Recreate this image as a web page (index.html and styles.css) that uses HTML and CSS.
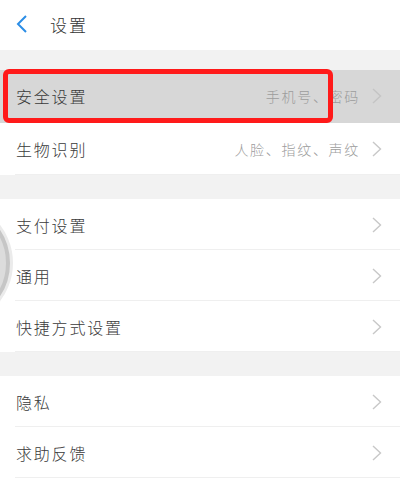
FILE: index.html
```html
<!DOCTYPE html>
<html lang="zh-CN">
<head>
<meta charset="utf-8">
<title>设置</title>
<link rel="stylesheet" href="styles.css">
</head>
<body>
<div class="page">
  <header class="header">
    <svg class="back" width="12" height="20" viewBox="0 0 12 20"><path d="M10 2 L2 10 L10 18" fill="none" stroke="#2b8de6" stroke-width="2"/></svg>
    <span class="title">设置</span>
  </header>

  <div class="gap first"></div>
  <section class="group tall">
    <div class="row active">
      <span class="label">安全设置</span>
      <span class="value">手机号、密码</span>
      <svg class="chev" width="10" height="16" viewBox="0 0 10 16"><path d="M1 1 L8.5 8 L1 15" fill="none" stroke="#c4c4c4" stroke-width="1.4"/></svg>
      <div class="mark"></div>
    </div>
    <div class="row">
      <span class="label">生物识别</span>
      <span class="value">人脸、指纹、声纹</span>
      <svg class="chev" width="10" height="16" viewBox="0 0 10 16"><path d="M1 1 L8.5 8 L1 15" fill="none" stroke="#c8c8c8" stroke-width="1.4"/></svg>
    </div>
  </section>

  <div class="gap"></div>
  <section class="group">
    <div class="row">
      <span class="label">支付设置</span>
      <svg class="chev" width="10" height="16" viewBox="0 0 10 16"><path d="M1 1 L8.5 8 L1 15" fill="none" stroke="#c8c8c8" stroke-width="1.4"/></svg>
    </div>
    <div class="row">
      <span class="label">通用</span>
      <svg class="chev" width="10" height="16" viewBox="0 0 10 16"><path d="M1 1 L8.5 8 L1 15" fill="none" stroke="#c8c8c8" stroke-width="1.4"/></svg>
    </div>
    <div class="row">
      <span class="label">快捷方式设置</span>
      <svg class="chev" width="10" height="16" viewBox="0 0 10 16"><path d="M1 1 L8.5 8 L1 15" fill="none" stroke="#c8c8c8" stroke-width="1.4"/></svg>
    </div>
  </section>

  <div class="gap"></div>
  <section class="group">
    <div class="row">
      <span class="label">隐私</span>
      <svg class="chev" width="10" height="16" viewBox="0 0 10 16"><path d="M1 1 L8.5 8 L1 15" fill="none" stroke="#c8c8c8" stroke-width="1.4"/></svg>
    </div>
    <div class="row">
      <span class="label">求助反馈</span>
      <svg class="chev" width="10" height="16" viewBox="0 0 10 16"><path d="M1 1 L8.5 8 L1 15" fill="none" stroke="#c8c8c8" stroke-width="1.4"/></svg>
    </div>
  </section>

  <div class="ball"></div>
</div>
</body>
</html>
```

FILE: styles.css
```css
html, body {
  margin: 0;
  padding: 0;
  background: #ffffff;
}
body {
  font-family: "Noto Sans CJK SC", "Noto Sans", sans-serif;
  color: #333333;
  overflow: hidden;
}
.page {
  position: relative;
  width: 400px;
  height: 484px;
  overflow: hidden;
  background: #ffffff;
}
.header {
  height: 50px;
  display: flex;
  align-items: center;
  padding-left: 16px;
  box-sizing: border-box;
}
.back {
  display: block;
  margin-top: -2px;
}
.title {
  margin-left: 22px;
  font-size: 17px;
  letter-spacing: 2px;
  font-weight: 300;
  color: #333;
  margin-top: -2px;
}
.gap {
  height: 24px;
  background: #f2f2f2;
}
.gap.first {
  height: 20px;
}
.group {
  display: flex;
  flex-direction: column;
}
.row {
  position: relative;
  height: 51px;
  display: flex;
  align-items: center;
  padding: 0 18px 0 16px;
  box-sizing: border-box;
}
.group.tall .row {
  height: 52.5px;
}
.row::after {
  content: "";
  position: absolute;
  left: 15px;
  right: 0;
  bottom: 0;
  height: 1px;
  background: #efefef;
}
.row.active {
  background: #d7d7d7;
}
.row.active::after {
  display: none;
}
.label {
  font-size: 16px;
  letter-spacing: 1.8px;
  font-weight: 300;
  color: #3a3a3a;
  flex: 1;
}
.value {
  font-size: 14px;
  letter-spacing: 1.7px;
  font-weight: 300;
  color: #9c9c9c;
  margin-right: 12px;
}
.chev {
  display: block;
}
.mark {
  position: absolute;
  left: 3px;
  top: -1px;
  width: 330px;
  height: 54px;
  border: 5px solid #ff1a1a;
  border-radius: 6px;
  box-sizing: border-box;
}
.ball {
  position: absolute;
  left: -110px;
  top: 203px;
  width: 120px;
  height: 120px;
  border-radius: 50%;
  background: #dcdcdc;
  border: 4px solid #c6c6c6;
  box-sizing: border-box;
  box-shadow: 0 0 0 3px #ebebeb;
}
```
